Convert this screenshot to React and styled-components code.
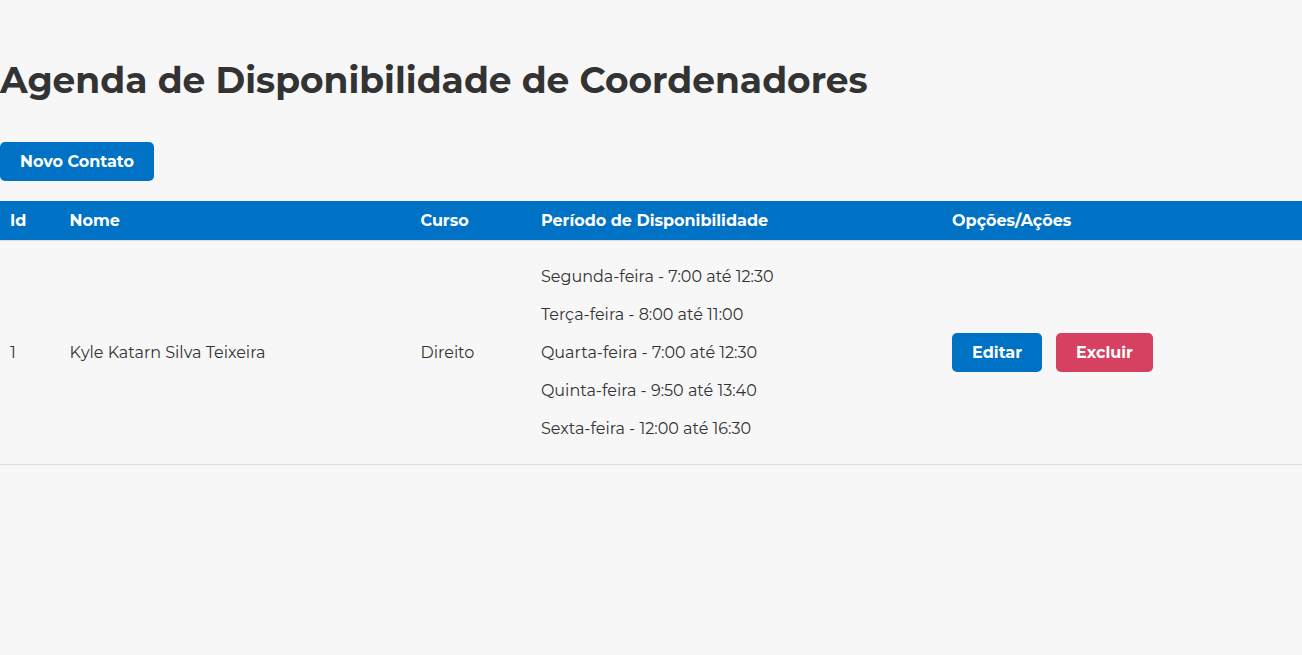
import React from "react";
import styled, { createGlobalStyle } from "styled-components";

const GlobalStyle = createGlobalStyle`
  * { box-sizing: border-box; }
  body {
    margin: 0;
    background: #f7f7f7;
    color: #333;
    font-family: Montserrat, "Open Sans", sans-serif;
    font-size: 16px;
    line-height: 19px;
  }
`;

const Page = styled.main`
  padding-top: 58px;
`;

const Title = styled.h1`
  margin: 0 0 40px;
  font-size: 36px;
  line-height: 44px;
  font-weight: 700;
`;

const Button = styled.button`
  padding: 10px 20px;
  border: 0;
  border-radius: 5px;
  background: ${({ $danger }) => ($danger ? "#d64161" : "#0072c6")};
  color: #fff;
  font: inherit;
  font-weight: 700;
  cursor: pointer;
`;

const Table = styled.table`
  width: 100%;
  margin-top: 20px;
  border-collapse: collapse;
  table-layout: fixed;
`;

const Column = styled.col`
  width: ${({ $width }) => $width};
`;

const HeaderCell = styled.th`
  padding: 10px;
  border-bottom: 1px solid #ddd;
  background: #0072c6;
  color: #fff;
  text-align: left;
  font-weight: 700;
`;

const Cell = styled.td`
  padding: 10px;
  border-bottom: 1px solid #ddd;
`;

const Periods = styled.ul`
  margin: 0;
  padding: 16px 0;
  list-style: none;
  display: grid;
  gap: 19px;
`;

const Actions = styled.div`
  display: flex;
  gap: 14px;
`;

const periods = [
  "Segunda-feira - 7:00 até 12:30",
  "Terça-feira - 8:00 até 11:00",
  "Quarta-feira - 7:00 até 12:30",
  "Quinta-feira - 9:50 até 13:40",
  "Sexta-feira - 12:00 até 16:30",
];

export default function App() {
  return (
    <Page>
      <GlobalStyle />
      <Title>Agenda de Disponibilidade de Coordenadores</Title>
      <Button type="button">Novo Contato</Button>
      <Table>
        <colgroup>
          <Column $width="4.57%" />
          <Column $width="26.96%" />
          <Column $width="9.25%" />
          <Column $width="31.58%" />
          <Column />
        </colgroup>
        <thead>
          <tr>
            <HeaderCell scope="col">Id</HeaderCell>
            <HeaderCell scope="col">Nome</HeaderCell>
            <HeaderCell scope="col">Curso</HeaderCell>
            <HeaderCell scope="col">Período de Disponibilidade</HeaderCell>
            <HeaderCell scope="col">Opções/Ações</HeaderCell>
          </tr>
        </thead>
        <tbody>
          <tr>
            <Cell>1</Cell>
            <Cell>Kyle Katarn Silva Teixeira</Cell>
            <Cell>Direito</Cell>
            <Cell>
              <Periods>
                {periods.map((period) => (
                  <li key={period}>{period}</li>
                ))}
              </Periods>
            </Cell>
            <Cell>
              <Actions>
                <Button type="button">Editar</Button>
                <Button type="button" $danger>Excluir</Button>
              </Actions>
            </Cell>
          </tr>
        </tbody>
      </Table>
    </Page>
  );
}
